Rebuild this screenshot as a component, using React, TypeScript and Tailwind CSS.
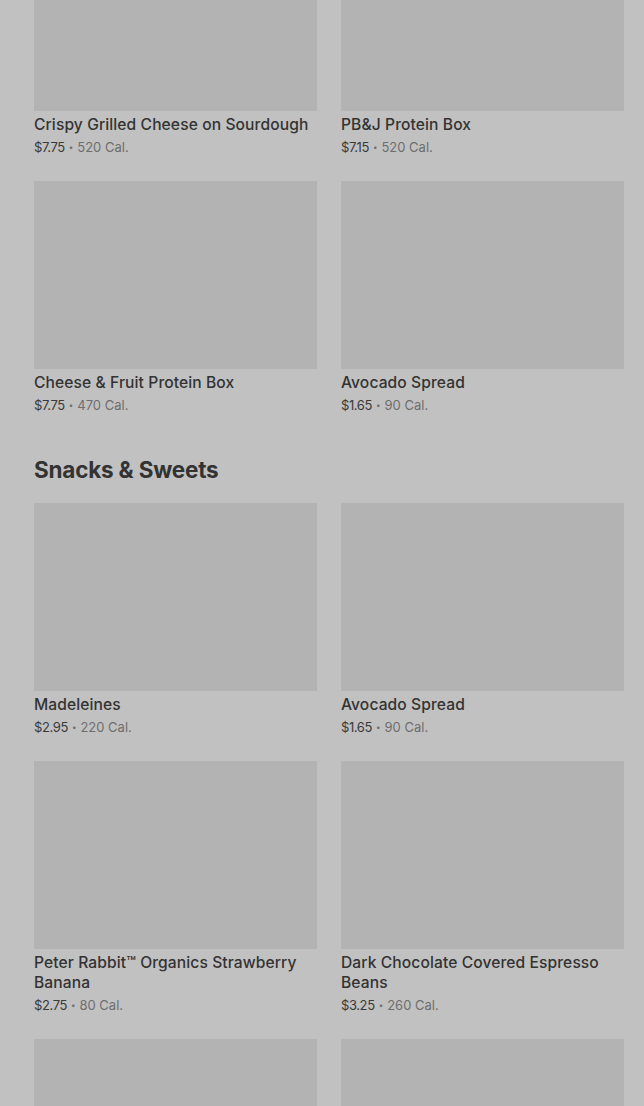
import React from "react";

type Item = { name: string; price: string; cal: string };

const mains: Item[] = [
  { name: "Crispy Grilled Cheese on Sourdough", price: "$7.75", cal: "520 Cal." },
  { name: "PB&J Protein Box", price: "$7.15", cal: "520 Cal." },
  { name: "Cheese & Fruit Protein Box", price: "$7.75", cal: "470 Cal." },
  { name: "Avocado Spread", price: "$1.65", cal: "90 Cal." },
];

const snacks: Item[] = [
  { name: "Madeleines", price: "$2.95", cal: "220 Cal." },
  { name: "Avocado Spread", price: "$1.65", cal: "90 Cal." },
  { name: "Peter Rabbit™ Organics Strawberry Banana", price: "$2.75", cal: "80 Cal." },
  { name: "Dark Chocolate Covered Espresso Beans", price: "$3.25", cal: "260 Cal." },
  { name: "Chocolate Chip Cookie", price: "$2.45", cal: "370 Cal." },
  { name: "Kettle Chips", price: "$1.95", cal: "220 Cal." },
];

const Card = ({ item }: { item: Item }) => (
  <div className="flex flex-col">
    <div className="h-[188px] bg-[#b3b3b3]" />
    <div className="pt-[4px] pb-[24px]">
      <div className="text-[15.6px] leading-5 font-medium text-[#333333] tracking-[0.1px]">
        {item.name}
      </div>
      <div className="mt-[2px] text-[13px] leading-5 flex items-center">
        <span className="text-[#3a3a3a] tracking-[-0.4px]">{item.price}</span>
        <span className="mx-[4px] text-[8px] text-[#6e6e6e]">•</span>
        <span className="text-[#6e6e6e]">{item.cal}</span>
      </div>
    </div>
  </div>
);

export default function App() {
  return (
    <div
      className="w-[644px] h-[1106px] overflow-hidden bg-[#c1c1c1]"
      style={{ fontFamily: "Inter, 'Liberation Sans', sans-serif" }}
    >
      <div className="mt-[-77px] pl-[34px] pr-[20px]">
        {/* Previous section, scrolled past its heading */}
        <div className="grid grid-cols-2 gap-x-6">
          {mains.map((item, i) => (
            <Card key={i} item={item} />
          ))}
        </div>

        {/* Snacks */}
        <h2 className="mt-[18px] mb-5 text-[22.5px] leading-[26px] font-bold text-[#333333] tracking-[-0.2px]">
          Snacks &amp; Sweets
        </h2>
        <div className="grid grid-cols-2 gap-x-6">
          {snacks.map((item, i) => (
            <Card key={i} item={item} />
          ))}
        </div>
      </div>
    </div>
  );
}
